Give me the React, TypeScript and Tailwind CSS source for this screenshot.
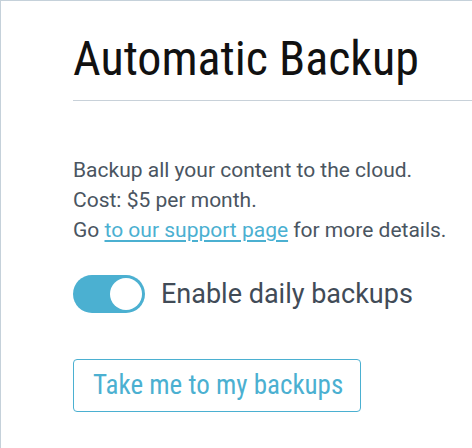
import React, { useState } from "react";

export default function App() {
  const [on, setOn] = useState(true);
  return (
    <div className="w-[472px] h-[448px] bg-white border-l border-t border-[#c5d1da] overflow-hidden" style={{ fontFamily: "Roboto, 'Noto Sans', sans-serif" }}>
      <div className="pl-[72px] pt-[30px]">
        <h1 className="text-[48px] leading-[56px] text-[#111111] font-normal [font-stretch:condensed]">Automatic Backup</h1>
        <div className="mt-[13px] h-px bg-[#c8d1d9]" />
        <div className="mt-[54px] text-[21px] leading-[30px] text-[#4a5561]">
          <p>Backup all your content to the cloud.</p>
          <p>Cost: $5 per month.</p>
          <p>
            Go <a href="#" className="text-[#4bb0d1] underline underline-offset-[3px]">to our support page</a> for more details.
          </p>
        </div>
        <label className="mt-[30px] flex items-center gap-[16px] cursor-pointer">
          <button
            type="button"
            onClick={() => setOn(!on)}
            className="w-[72px] h-[38px] rounded-full bg-[#4bb0d1] p-[3px] flex items-center justify-end"
          >
            <span className="w-[32px] h-[32px] rounded-full bg-white block" />
          </button>
          <span className="text-[27px] leading-[38px] text-[#414b57]">Enable daily backups</span>
        </label>
        <button
          type="button"
          className="mt-[46px] w-[288px] h-[53px] border border-[#4bb0d1] rounded-[4px] text-[27px] leading-[51px] text-[#4bb0d1] [font-stretch:condensed] text-left pl-[19px]"
        >
          Take me to my backups
        </button>
      </div>
    </div>
  );
}
